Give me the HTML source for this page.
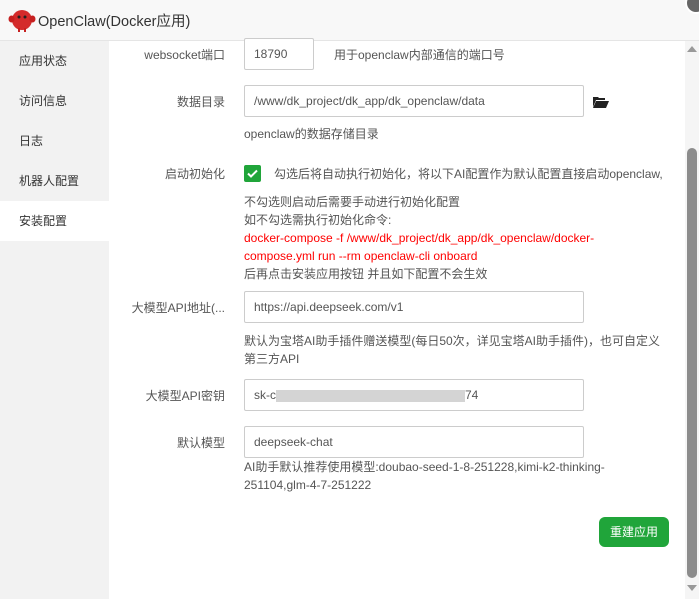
<!DOCTYPE html>
<html><head><meta charset="utf-8"><style>
*{margin:0;padding:0;box-sizing:border-box}
body{width:699px;height:599px;overflow:hidden;background:#fff;font-family:"Liberation Sans","Noto Sans CJK SC",sans-serif;font-size:12px;color:#333;position:relative}
.hdr{position:absolute;left:0;top:0;width:699px;height:41px;background:#f8f8f8;border-bottom:1px solid #e5e5e5}
.title{position:absolute;left:38px;top:10px;font-size:14.5px;color:#333}
.side{position:absolute;left:0;top:41px;width:109px;height:558px;background:#f2f2f2}
.side div{height:40px;line-height:40px;padding-left:19px;font-size:12px;color:#333}
.side .on{background:#fff}
.a{position:absolute}
.lbl{position:absolute;text-align:right;width:120px;left:105px;color:#555}
.inp{position:absolute;left:244px;height:32px;border:1px solid #ccc;border-radius:2px;padding-left:9px;line-height:30px;color:#555;background:#fff}
.t{position:absolute;left:244px;line-height:18px;color:#555}
.red{color:#f00}
.btn{position:absolute;left:599px;top:517px;width:70px;height:30px;background:#20a53a;color:#fff;border-radius:6px;text-align:center;line-height:30px;font-size:12px}
.track{position:absolute;left:685px;top:41px;width:14px;height:558px;background:#f5f5f5}
.thumb{position:absolute;left:687px;top:148px;width:10px;height:430px;background:#8c8c8c;border-radius:5px}
</style></head><body>
<div class="hdr">
<svg class="a" style="left:8px;top:7px" width="28" height="26" viewBox="0 0 28 26"><circle cx="14" cy="13" r="10" fill="#d42b2b"/><ellipse cx="3.5" cy="12" rx="3" ry="3.5" fill="#c62020"/><ellipse cx="24.5" cy="12" rx="3" ry="3.5" fill="#c62020"/><circle cx="11" cy="10" r="1.5" fill="#222"/><circle cx="17" cy="10" r="1.5" fill="#222"/><rect x="10" y="21" width="2" height="4" fill="#c62020"/><rect x="16" y="21" width="2" height="4" fill="#c62020"/></svg>
<div class="title">OpenClaw(Docker应用)</div>
<div class="a" style="left:685px;top:-8px;width:22px;height:22px;border-radius:50%;background:#666;border:2px solid #fff"></div>
</div>
<div class="side"><div>应用状态</div><div>访问信息</div><div>日志</div><div>机器人配置</div><div class="on">安装配置</div></div>

<div class="lbl" style="top:46px">websocket端口</div>
<div class="inp" style="top:38px;width:70px">18790</div>
<div class="t" style="left:334px;top:46px">用于openclaw内部通信的端口号</div>

<div class="lbl" style="top:93px">数据目录</div>
<div class="inp" style="top:85px;width:340px">/www/dk_project/dk_app/dk_openclaw/data</div>
<svg class="a" style="left:593px;top:96px" width="16" height="12" viewBox="0 0 16 12"><path d="M0 1h5l1 1h6v2H3L0 11z M3 5h13l-3 7H0z" fill="#222"/></svg>
<div class="t" style="top:125px">openclaw的数据存储目录</div>

<div class="lbl" style="top:165px">启动初始化</div>
<svg class="a" style="left:244px;top:165px" width="17" height="17" viewBox="0 0 17 17"><rect width="17" height="17" rx="2" fill="#20a53a"/><path d="M4 8.5l3 3 6-6" stroke="#fff" stroke-width="2" fill="none"/></svg>
<div class="t" style="left:274px;top:165px">勾选后将自动执行初始化，将以下AI配置作为默认配置直接启动openclaw,</div>
<div class="t" style="top:193px">不勾选则启动后需要手动进行初始化配置<br>如不勾选需执行初始化命令:<br><span class="red">docker-compose -f /www/dk_project/dk_app/dk_openclaw/docker-<br>compose.yml run --rm openclaw-cli onboard</span><br>后再点击安装应用按钮 并且如下配置不会生效</div>

<div class="lbl" style="top:299px">大模型API地址(...</div>
<div class="inp" style="top:291px;width:340px">https://api.deepseek.com/v1</div>
<div class="t" style="top:332px">默认为宝塔AI助手插件赠送模型(每日50次，详见宝塔AI助手插件)，也可自定义<br>第三方API</div>

<div class="lbl" style="top:387px">大模型API密钥</div>
<div class="inp" style="top:379px;width:340px">sk-c<span style="display:inline-block;width:189px;height:12px;background:#d4d4d4;vertical-align:middle"></span>74</div>

<div class="lbl" style="top:434px">默认模型</div>
<div class="inp" style="top:426px;width:340px">deepseek-chat</div>
<div class="t" style="top:458px">AI助手默认推荐使用模型:doubao-seed-1-8-251228,kimi-k2-thinking-<br>251104,glm-4-7-251222</div>

<div class="btn">重建应用</div>
<div class="track"></div>
<div class="thumb"></div>
<svg class="a" style="left:687px;top:46px" width="10" height="6"><path d="M0 6L5 0L10 6z" fill="#999"/></svg>
<svg class="a" style="left:687px;top:585px" width="10" height="6"><path d="M0 0L5 6L10 0z" fill="#999"/></svg>
</body></html>
